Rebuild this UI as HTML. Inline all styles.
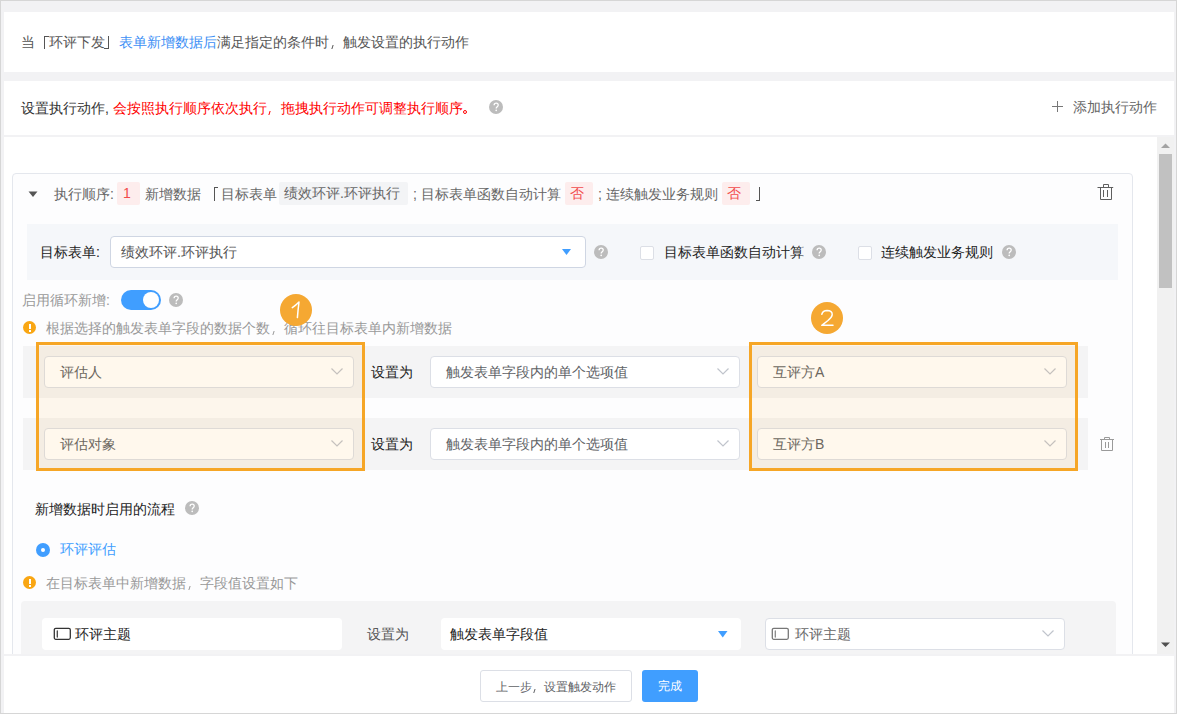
<!DOCTYPE html>
<html><head><meta charset="utf-8">
<style>
*{box-sizing:border-box;margin:0;padding:0}
html,body{width:1177px;height:714px;overflow:hidden}
body{position:relative;background:#f2f2f4;font-family:"Liberation Sans",sans-serif;font-size:14px;color:#555;line-height:20px}
.a{position:absolute;white-space:nowrap}
.frame{position:absolute;left:0;top:0;width:1177px;height:714px;border:1px solid #d6d6d6;pointer-events:none}
.white{position:absolute;background:#fff}
.q{position:absolute;width:14px;height:14px;border-radius:50%;background:#bcbcbc;color:#fff;font-size:11px;font-weight:bold;line-height:14px;text-align:center}
.warn{position:absolute;width:13px;height:13px;border-radius:50%;background:#f9a613}
.warn:after{content:"";position:absolute;left:5.5px;top:2.5px;width:2px;height:5px;background:#fff}
.warn:before{content:"";position:absolute;left:5.5px;top:8.5px;width:2px;height:2px;background:#fff}
.tag{position:absolute;height:23px;line-height:23px;padding:0 7px;border-radius:2px;white-space:nowrap}
.tr{background:#fdeded;color:#f24b4b;padding:0 9px 0 5px}
.tg{background:#f3f4f6;color:#666;padding:0 8px 0 5px}
.inp{position:absolute;height:32px;border:1px solid #dcdfe6;border-radius:4px;background:#fff;line-height:30px;padding-left:15px;color:#606266;white-space:nowrap}
.row{position:absolute;background:#f4f4f5}
.chev{position:absolute;width:12px;height:7px}
.cb{position:absolute;width:14px;height:14px;border:1px solid #dcdfe6;border-radius:2px;background:#fff}
.obox{position:absolute;border:3px solid #f6a626;background:rgba(250,165,30,0.08)}
.badge{position:absolute;width:32px;height:32px;border-radius:50%;background:#f5a832;color:#fff;text-align:center;font-size:20px;line-height:32px}
.fc{display:inline-block;width:14px;height:0;position:relative;font-style:normal}
.fc:after{content:"";position:absolute;left:2.6px;top:-2px;width:1.1px;height:4px;background:currentColor;transform:skewX(-18deg)}
.fs .fc{width:12px}.fs .fc:after{left:2.2px;height:3.5px}
.fp{display:inline-block;width:14px;height:0;position:relative}
.fp:after{content:"";position:absolute;left:0px;top:-3px;width:4px;height:4px;border:1.2px solid currentColor;border-radius:50%;box-sizing:border-box}
</style></head>
<body>
<!-- top card -->
<div class="white" style="left:4px;top:12px;width:1170px;height:60px"></div>
<div class="a" style="left:21px;top:32px">当　环评下发　<span style="color:#3d8ff5">表单新增数据后</span>满足指定的条件时<i class="fc"></i>触发设置的执行动作</div>
<div style="position:absolute;left:44px;top:36px;width:5px;height:13px;border-left:1px solid #555;border-top:1px solid #555"></div>
<div style="position:absolute;left:104px;top:36px;width:5px;height:13px;border-right:1px solid #555;border-bottom:1px solid #555"></div>

<!-- second card -->
<div class="white" style="left:4px;top:81px;width:1170px;height:54px"></div>
<div class="a" style="left:21px;top:98px;color:#333">设置执行动作, <span style="color:#f00">会按照执行顺序依次执行<i class="fc"></i>拖拽执行动作可调整执行顺序<i class="fp"></i></span></div>
<svg class="a" style="left:489px;top:100px" width="14" height="14"><circle cx="7" cy="7" r="7" fill="#bcbcbc"/><path d="M5.1 5.3 Q5.1 3.2 7.2 3.2 Q9.2 3.2 9.2 5.1 Q9.2 6.2 8.1 6.9 Q7.2 7.4 7.2 8.6" stroke="#fff" stroke-width="1.3" fill="none"/><circle cx="7.2" cy="10.3" r="0.85" fill="#fff"/></svg>
<svg class="a" style="left:1051px;top:100px" width="13" height="13"><path d="M1 6.5 H12 M6.5 1 V12" stroke="#777" stroke-width="1"/></svg>
<div class="a" style="left:1073px;top:97px;color:#666">添加执行动作</div>

<!-- scroll area -->
<div class="white" style="left:4px;top:137px;width:1170px;height:517px;overflow:hidden">
</div>

<!-- inner box -->
<div style="position:absolute;left:12px;top:173px;width:1121px;height:500px;border:1px solid #e4e7ed;border-radius:4px;background:#fdfdfe"></div>

<!-- header row -->
<svg class="a" style="left:28px;top:191px" width="10" height="7"><path d="M0.5 0.5 L9.5 0.5 L5 6 Z" fill="#555"/></svg>
<div class="a" style="left:54px;top:184px;color:#666">执行顺序:</div>
<div class="tag tr" style="left:117px;top:182px;width:23px;padding:0 0 0 6px">1</div>
<div class="a" style="left:145px;top:184px;color:#666">新增数据</div>
<div class="a" style="left:207px;top:184px;color:#666">　目标表单</div>
<div style="position:absolute;left:214px;top:187px;width:4px;height:14px;border-left:1px solid #555;border-top:1px solid #555"></div>
<div class="tag tg" style="left:279px;top:182px">绩效环评.环评执行</div>
<div class="a" style="left:413px;top:184px;color:#666">; 目标表单函数自动计算</div>
<div class="tag tr" style="left:565px;top:182px">否</div>
<div class="a" style="left:598px;top:184px;color:#666">; 连续触发业务规则</div>
<div class="tag tr" style="left:722px;top:182px">否</div>
<div style="position:absolute;left:756px;top:187px;width:4px;height:14px;border-right:1px solid #555;border-bottom:1px solid #555"></div>
<svg class="a" style="left:1096px;top:183px" width="19" height="19"><g fill="none" stroke="#5f5f5f" stroke-width="1"><path d="M7.5 4.5 V1.5 H12.5 V4.5"/><path d="M1.5 4.5 H17.2"/><path d="M4.5 4.5 V16.5 H15.5 V4.5"/><path d="M7.5 7 V14 M11.5 7 V14"/></g></svg>

<!-- target form panel -->
<div style="position:absolute;left:27px;top:224px;width:1091px;height:56px;background:#f5f7fa"></div>
<div class="a" style="left:40px;top:242px;color:#222">目标表单:</div>
<div class="inp" style="left:110px;top:236px;width:476px;border-color:#cfd6e3;padding-left:10px;color:#555">绩效环评.环评执行</div>
<svg class="a" style="left:562px;top:249px" width="10" height="7"><path d="M0 0 L9 0 L4.5 6 Z" fill="#409eff"/></svg>
<svg class="a" style="left:594px;top:245px" width="14" height="14"><circle cx="7" cy="7" r="7" fill="#bcbcbc"/><path d="M5.1 5.3 Q5.1 3.2 7.2 3.2 Q9.2 3.2 9.2 5.1 Q9.2 6.2 8.1 6.9 Q7.2 7.4 7.2 8.6" stroke="#fff" stroke-width="1.3" fill="none"/><circle cx="7.2" cy="10.3" r="0.85" fill="#fff"/></svg>
<div class="cb" style="left:640px;top:246px"></div>
<div class="a" style="left:664px;top:242px;color:#222">目标表单函数自动计算</div>
<svg class="a" style="left:812px;top:245px" width="14" height="14"><circle cx="7" cy="7" r="7" fill="#bcbcbc"/><path d="M5.1 5.3 Q5.1 3.2 7.2 3.2 Q9.2 3.2 9.2 5.1 Q9.2 6.2 8.1 6.9 Q7.2 7.4 7.2 8.6" stroke="#fff" stroke-width="1.3" fill="none"/><circle cx="7.2" cy="10.3" r="0.85" fill="#fff"/></svg>
<div class="cb" style="left:858px;top:246px"></div>
<div class="a" style="left:881px;top:242px;color:#222">连续触发业务规则</div>
<svg class="a" style="left:1002px;top:245px" width="14" height="14"><circle cx="7" cy="7" r="7" fill="#bcbcbc"/><path d="M5.1 5.3 Q5.1 3.2 7.2 3.2 Q9.2 3.2 9.2 5.1 Q9.2 6.2 8.1 6.9 Q7.2 7.4 7.2 8.6" stroke="#fff" stroke-width="1.3" fill="none"/><circle cx="7.2" cy="10.3" r="0.85" fill="#fff"/></svg>

<!-- loop -->
<div class="a" style="left:22px;top:290px;color:#999">启用循环新增:</div>
<div style="position:absolute;left:121px;top:290px;width:40px;height:20px;border-radius:10px;background:#409eff"></div>
<div style="position:absolute;left:143px;top:292px;width:16px;height:16px;border-radius:50%;background:#fff"></div>
<svg class="a" style="left:169px;top:293px" width="14" height="14"><circle cx="7" cy="7" r="7" fill="#bcbcbc"/><path d="M5.1 5.3 Q5.1 3.2 7.2 3.2 Q9.2 3.2 9.2 5.1 Q9.2 6.2 8.1 6.9 Q7.2 7.4 7.2 8.6" stroke="#fff" stroke-width="1.3" fill="none"/><circle cx="7.2" cy="10.3" r="0.85" fill="#fff"/></svg>
<div class="warn" style="left:23px;top:321px"></div>
<div class="a" style="left:46px;top:318px;color:#999">根据选择的触发表单字段的数据个数<i class="fc"></i>循环往目标表单内新增数据</div>

<!-- rows -->
<div class="row" style="left:23px;top:346px;width:1065px;height:52px"></div>
<div class="row" style="left:23px;top:418px;width:1065px;height:52px"></div>

<div class="inp" style="left:44px;top:356px;width:310px">评估人</div>
<div class="inp" style="left:44px;top:428px;width:310px">评估对象</div>
<div class="a" style="left:371px;top:362px;color:#222">设置为</div>
<div class="a" style="left:371px;top:434px;color:#222">设置为</div>
<div class="inp" style="left:430px;top:356px;width:310px">触发表单字段内的单个选项值</div>
<div class="inp" style="left:430px;top:428px;width:310px">触发表单字段内的单个选项值</div>
<div class="inp" style="left:757px;top:356px;width:310px">互评方A</div>
<div class="inp" style="left:757px;top:428px;width:310px">互评方B</div>
<svg class="chev" style="left:331px;top:368px" width="12" height="7"><path d="M0.5 0.5 L6 6 L11.5 0.5" fill="none" stroke="#c0c4cc" stroke-width="1.2"/></svg>
<svg class="chev" style="left:331px;top:440px" width="12" height="7"><path d="M0.5 0.5 L6 6 L11.5 0.5" fill="none" stroke="#c0c4cc" stroke-width="1.2"/></svg>
<svg class="chev" style="left:717px;top:368px" width="12" height="7"><path d="M0.5 0.5 L6 6 L11.5 0.5" fill="none" stroke="#c0c4cc" stroke-width="1.2"/></svg>
<svg class="chev" style="left:717px;top:440px" width="12" height="7"><path d="M0.5 0.5 L6 6 L11.5 0.5" fill="none" stroke="#c0c4cc" stroke-width="1.2"/></svg>
<svg class="chev" style="left:1044px;top:368px" width="12" height="7"><path d="M0.5 0.5 L6 6 L11.5 0.5" fill="none" stroke="#c0c4cc" stroke-width="1.2"/></svg>
<svg class="chev" style="left:1044px;top:440px" width="12" height="7"><path d="M0.5 0.5 L6 6 L11.5 0.5" fill="none" stroke="#c0c4cc" stroke-width="1.2"/></svg>
<svg class="a" style="left:1098px;top:435px" width="18" height="18"><g fill="none" stroke="#9a9a9a" stroke-width="1"><path d="M6.5 4.5 V2.5 H11.5 V4.5"/><path d="M2 4.5 H16"/><path d="M3.5 4.5 V15.5 H14.5 V4.5"/><path d="M7.5 7 V13 M10.5 7 V13"/></g></svg>

<!-- orange annotation boxes -->
<div class="obox" style="left:36px;top:342px;width:329px;height:129px"></div>
<div class="obox" style="left:749px;top:342px;width:329px;height:129px"></div>
<div class="badge" style="left:280px;top:294px"></div><svg class="a" style="left:280px;top:294px" width="32" height="32"><path d="M12.3 13.6 Q16 11.2 19 8 Q18 16 17.4 23.6" fill="none" stroke="#fff" stroke-width="1.5" stroke-linecap="round" stroke-linejoin="round"/></svg>
<div class="badge" style="left:811px;top:302px"></div><svg class="a" style="left:811px;top:302px" width="32" height="32"><path d="M10.8 12.2 Q12 8.6 16 8.6 Q21.4 8.8 21.2 12.6 Q21 15 17 18.5 L10.8 23.3 L22 23.3" fill="none" stroke="#fff" stroke-width="1.5" stroke-linecap="round" stroke-linejoin="round"/></svg>

<!-- flow -->
<div class="a" style="left:35px;top:499px;color:#222">新增数据时启用的流程</div>
<svg class="a" style="left:185px;top:501px" width="14" height="14"><circle cx="7" cy="7" r="7" fill="#bcbcbc"/><path d="M5.1 5.3 Q5.1 3.2 7.2 3.2 Q9.2 3.2 9.2 5.1 Q9.2 6.2 8.1 6.9 Q7.2 7.4 7.2 8.6" stroke="#fff" stroke-width="1.3" fill="none"/><circle cx="7.2" cy="10.3" r="0.85" fill="#fff"/></svg>
<div style="position:absolute;left:36px;top:543px;width:14px;height:14px;border-radius:50%;background:#409eff"></div>
<div style="position:absolute;left:41px;top:548px;width:4px;height:4px;border-radius:50%;background:#fff"></div>
<div class="a" style="left:60px;top:539px;color:#409eff">环评评估</div>
<div class="warn" style="left:23px;top:576px"></div>
<div class="a" style="left:46px;top:573px;color:#999">在目标表单中新增数据<i class="fc"></i>字段值设置如下</div>

<div style="position:absolute;left:21px;top:601px;width:1095px;height:80px;border-radius:4px;background:#f4f4f5"></div>
<div style="position:absolute;left:42px;top:618px;width:300px;height:32px;border-radius:4px;background:#fff"></div>
<svg class="a" style="left:53px;top:627px" width="19" height="14"><rect x="1.3" y="1.3" width="16" height="11" rx="1.5" fill="none" stroke="#333" stroke-width="1.3"/><line x1="4.3" y1="4" x2="4.3" y2="10" stroke="#444" stroke-width="1.3" stroke-linecap="round"/></svg>
<div class="a" style="left:75px;top:624px;color:#222">环评主题</div>
<div class="a" style="left:367px;top:624px;color:#555">设置为</div>
<div style="position:absolute;left:441px;top:618px;width:300px;height:32px;border-radius:4px;background:#fff"></div>
<div class="a" style="left:450px;top:624px;color:#222">触发表单字段值</div>
<svg class="a" style="left:718px;top:631px" width="10" height="7"><path d="M0 0 L9.5 0 L4.75 6.5 Z" fill="#409eff"/></svg>
<div class="inp" style="left:765px;top:618px;width:300px;padding-left:29px;color:#666;line-height:30px">环评主题</div>
<svg class="a" style="left:771px;top:627px" width="19" height="14"><rect x="1.3" y="1.3" width="16" height="11" rx="1.5" fill="none" stroke="#777" stroke-width="1.3"/><line x1="4.3" y1="4" x2="4.3" y2="10" stroke="#888" stroke-width="1.3" stroke-linecap="round"/></svg>
<svg class="chev" style="left:1042px;top:630px" width="12" height="7"><path d="M0.5 0.5 L6 6 L11.5 0.5" fill="none" stroke="#c0c4cc" stroke-width="1.2"/></svg>

<!-- mask outside scroll area bottom -->
<div style="position:absolute;left:0;top:654px;width:1177px;height:60px;background:#f2f2f4"></div>

<!-- scrollbar -->
<div style="position:absolute;left:1157px;top:137px;width:17px;height:517px;background:#f1f1f1"></div>
<div style="position:absolute;left:1159px;top:154px;width:13px;height:134px;background:#c1c1c1"></div>
<svg class="a" style="left:1160px;top:143px" width="11" height="6"><path d="M5.5 0.5 L10 5 L1 5 Z" fill="#a3a3a3"/></svg>
<svg class="a" style="left:1160px;top:642px" width="11" height="6"><path d="M1 0.5 L10 0.5 L5.5 5 Z" fill="#505050"/></svg>

<!-- footer -->
<div class="white" style="left:4px;top:656px;width:1170px;height:57px"></div>
<div class="fs" style="position:absolute;left:480px;top:670px;width:152px;height:32px;border:1px solid #dcdfe6;border-radius:3px;background:#fff;color:#606266;font-size:12px;line-height:32px;text-align:center">上一步<i class="fc"></i>设置触发动作</div>
<div style="position:absolute;left:642px;top:670px;width:56px;height:32px;border-radius:3px;background:#409eff;color:#fff;font-size:12px;line-height:33px;text-align:center">完成</div>

<div class="frame"></div>
</body></html>
